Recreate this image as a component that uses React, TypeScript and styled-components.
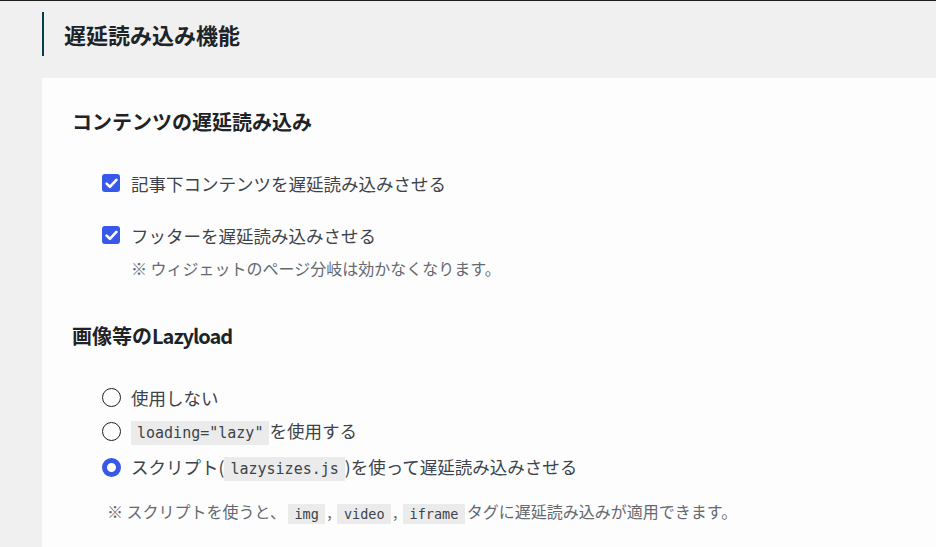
import React from 'react';
import styled, { createGlobalStyle } from 'styled-components';

const GlobalStyle = createGlobalStyle`
    html, body {
        margin: 0;
        padding: 0;
        background: #f0f0f0;
    }
    body {
        border-top: 1px solid #1d1d1d;
        font-family: "Noto Sans CJK JP", "Noto Sans", sans-serif;
        color: #3c434a;
        overflow: hidden;
    }
`;

const Page = styled.div`
    padding: 11px 0 0 42px;
    min-height: 546px;
    box-sizing: border-box;
`;

const PageTitle = styled.h2`
    margin: 0;
    height: 44px;
    line-height: 44px;
    padding-left: 20px;
    border-left: 2px solid #0b3b50;
    font-size: 22px;
    font-weight: 700;
    color: #1d2327;
`;

const Card = styled.section`
    margin-top: 22px;
    background: #fdfdfd;
    padding: 29px 0 40px 30px;
`;

const SectionTitle = styled.h3<{ $gap?: number }>`
    margin: ${(p) => p.$gap ?? 0}px 0 0;
    line-height: 30px;
    font-size: 20px;
    font-weight: 700;
    color: #1d2327;
`;

// latin words in headings sit a little tighter
const Latin = styled.span`
    letter-spacing: -1px;
`;

const OptionList = styled.div<{ $top: number }>`
    display: flex;
    flex-direction: column;
    margin-top: ${(p) => p.$top}px;
    padding-left: 30px;
`;

const Option = styled.label<{ $height: number; $space?: number; $gap: number }>`
    display: flex;
    align-items: center;
    gap: ${(p) => p.$gap}px;
    height: ${(p) => p.$height}px;
    margin-top: ${(p) => p.$space ?? 0}px;
    font-size: 17.5px;
    color: #3c434a;
    white-space: nowrap;
`;

const CheckBox = styled.span`
    flex: none;
    width: 18px;
    height: 18px;
    border-radius: 3px;
    background: #3858e9;
    display: flex;
    align-items: center;
    justify-content: center;
`;

const Radio = styled.span<{ $checked?: boolean }>`
    flex: none;
    box-sizing: border-box;
    width: 19px;
    height: 19px;
    border-radius: 50%;
    background: #fff;
    border: ${(p) => (p.$checked ? '5px solid #3858e9' : '1.5px solid #1e1e1e')};
`;

const Note = styled.p<{ $left: number; $top: number; $height: number }>`
    margin: ${(p) => p.$top}px 0 0 ${(p) => p.$left}px;
    line-height: ${(p) => p.$height}px;
    font-size: 16px;
    color: #646970;
    white-space: nowrap;
`;

const Code = styled.code<{ $small?: boolean }>`
    display: inline-block;
    font-family: "DejaVu Sans Mono", "Liberation Mono", monospace;
    font-size: ${(p) => (p.$small ? 13.5 : 15)}px;
    line-height: ${(p) => (p.$small ? 20 : 24)}px;
    padding: 0 ${(p) => (p.$small ? 6.5 : 6)}px;
    margin: ${(p) => (p.$small ? '0 2px' : '0')};
    background: #ebebeb;
    color: #3c434a;
    vertical-align: middle;
`;

const Check = () => (
    <CheckBox>
        <svg width="13" height="11" viewBox="0 0 13 11" fill="none">
            <path d="M1.6 5.6 4.9 8.8 11.4 1.9" stroke="#fff" strokeWidth="2.6" strokeLinecap="round" strokeLinejoin="round" />
        </svg>
    </CheckBox>
);

export default function App() {
    return (
        <>
            <GlobalStyle />
            <Page>
                <PageTitle>遅延読み込み機能</PageTitle>
                <Card>
                    <SectionTitle>コンテンツの遅延読み込み</SectionTitle>
                    <OptionList $top={28}>
                        <Option $height={36} $gap={11}>
                            <Check />
                            記事下コンテンツを遅延読み込みさせる
                        </Option>
                        <Option $height={36} $gap={11} $space={16}>
                            <Check />
                            フッターを遅延読み込みさせる
                        </Option>
                    </OptionList>
                    <Note $left={59} $top={3} $height={24}>
                        ※ ウィジェットのページ分岐は効かなくなります。
                    </Note>

                    <SectionTitle $gap={41}>
                        画像等の<Latin>Lazyload</Latin>
                    </SectionTitle>
                    <OptionList $top={29}>
                        <Option $height={34} $gap={10}>
                            <Radio />
                            使用しない
                        </Option>
                        <Option $height={35} $gap={10}>
                            <Radio />
                            <span>
                                <Code>loading="lazy"</Code>を使用する
                            </span>
                        </Option>
                        <Option $height={37} $gap={10}>
                            <Radio $checked />
                            <span>
                                スクリプト(<Code>lazysizes.js</Code>)を使って遅延読み込みさせる
                            </span>
                        </Option>
                    </OptionList>
                    <Note $left={35} $top={11} $height={28}>
                        ※ スクリプトを使うと、<Code $small>img</Code>, <Code $small>video</Code>,{' '}
                        <Code $small>iframe</Code>タグに遅延読み込みが適用できます。
                    </Note>
                </Card>
            </Page>
        </>
    );
}
